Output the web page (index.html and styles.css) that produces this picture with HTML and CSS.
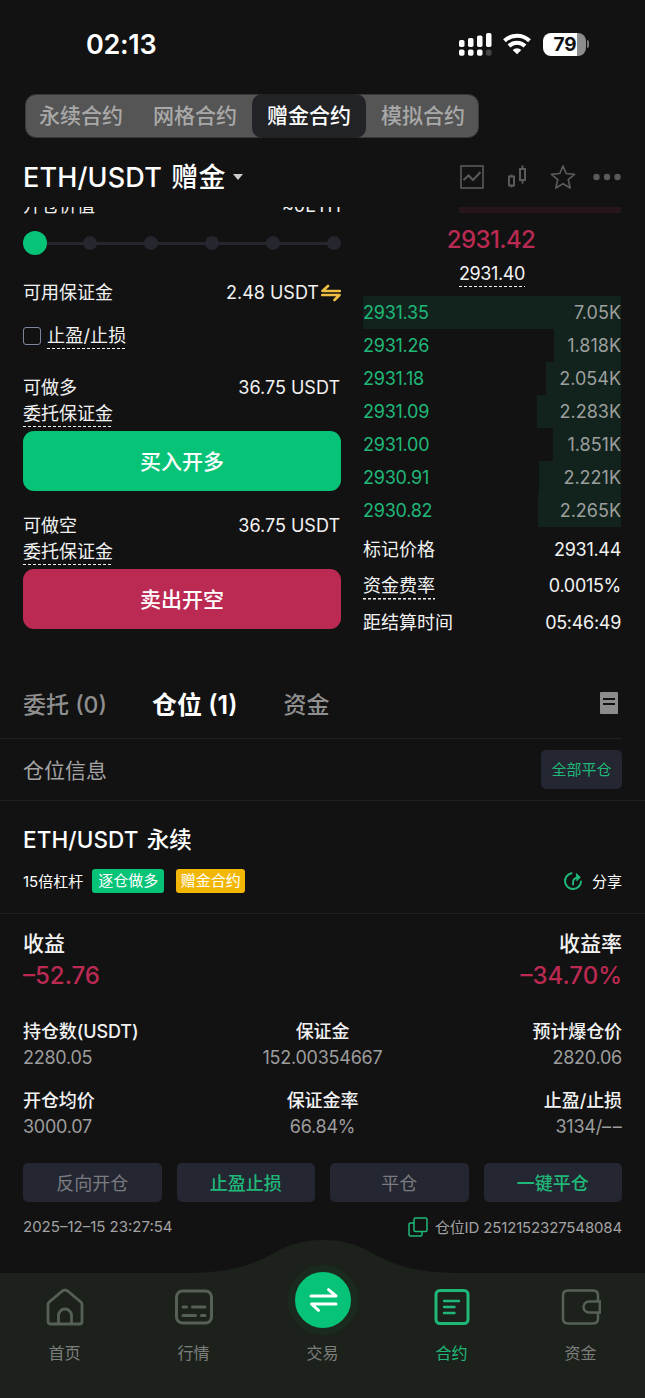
FILE: index.html
```html
<!DOCTYPE html>
<html lang="zh-CN">
<head>
<meta charset="UTF-8">
<meta name="viewport" content="width=device-width, initial-scale=1.0">
<title>ETH/USDT 赠金合约</title>
<link rel="stylesheet" href="styles.css">
</head>
<body>

<div class="status-bar">
    <span class="time">02:13</span>
    <svg class="signal" width="34" height="24" viewBox="0 0 34 24">
        <g fill="#fff">
            <rect x="0" y="8" width="5.500" height="7" rx="1.8"/>
            <rect x="9" y="6" width="5.500" height="9" rx="1.8"/>
            <rect x="18" y="3.500" width="5.500" height="11.500" rx="1.8"/>
            <rect x="27" y="1" width="5.500" height="14" rx="1.8"/>
            <rect x="0" y="17.500" width="5.500" height="6.200" rx="1.8"/>
            <rect x="9" y="17.500" width="5.500" height="6.200" rx="1.8"/>
            <rect x="18" y="17.500" width="5.500" height="6.200" rx="1.8"/>
        </g>
        <rect x="27" y="17.500" width="5.500" height="6.200" rx="1.8" fill="#444"/>
    </svg>
    <svg class="wifi" width="28" height="22" viewBox="0 0 28 22">
        <g fill="none" stroke="#fff" stroke-width="4">
            <path d="M1.500 7.800a18 18 0 0 1 25 0"/>
            <path d="M6 13a11.500 11.500 0 0 1 16 0"/>
        </g>
        <path d="M14 21.300l-4.300-4.400a6.200 6.200 0 0 1 8.600 0z" fill="#fff"/>
    </svg>
    <div class="battery"><span>79</span></div>
    <i class="battery-cap"></i>
</div>

<div class="contract-tabs">
    <span>永续合约</span>
    <span>网格合约</span>
    <span class="active">赠金合约</span>
    <span>模拟合约</span>
</div>

<div class="pair-bar">
    <h1 class="pair-name">ETH/USDT 赠金</h1>
    <i class="caret"></i>
    <div class="pair-icons">
        <svg width="24" height="24" viewBox="0 0 24 24" fill="none" stroke="#5a5a5a" stroke-width="1.6">
            <rect x="1" y="1" width="22" height="22"/>
            <path d="M3.500 15l5-4.500 4.500 4.500 7.500-8" stroke-width="2"/>
        </svg>
        <svg width="20" height="24" viewBox="0 0 20 24" fill="none" stroke="#5a5a5a" stroke-width="2">
            <path d="M2 11.500h5v9H2zM4.500 9.500v2M4.500 20.500v2M13 4h5v11h-5zM15.500 .5V4M15.500 15v3.500"/>
        </svg>
        <svg width="26" height="26" viewBox="0 0 26 26" fill="none" stroke="#5a5a5a" stroke-width="1.700" stroke-linejoin="round">
            <path d="M13 2l3.200 7.500 8.300.8-6.200 5.400 1.900 8.300L13 19.700 5.800 24l1.900-8.300L1.500 10.300l8.300-.8z"/>
        </svg>
        <svg width="28" height="8" viewBox="0 0 28 8" fill="#5a5a5a">
            <circle cx="3.500" cy="4" r="3.200"/><circle cx="14" cy="4" r="3.200"/><circle cx="24.500" cy="4" r="3.200"/>
        </svg>
    </div>
</div>

<div class="trade">
    <div class="order-form">
        <div class="clipped-row"><span>开仓价值</span><span><span class="tilde">~</span>0ETH</span></div>
        <div class="slider">
            <i class="knob"></i><i></i><i></i><i></i><i></i><i></i>
        </div>
        <div class="form-row available">
            <span>可用保证金</span>
            <span class="amount">2.48 USDT
                <svg width="20" height="18" viewBox="0 0 20 18" fill="none" stroke="#eebd42" stroke-width="2.700" stroke-linecap="round" stroke-linejoin="round">
                    <path d="M18.700 7H1.500L7 2M1.300 11h17.200L13.500 16"/>
                </svg>
            </span>
        </div>
        <div class="form-row stop">
            <i class="checkbox"></i><span class="dashed">止盈/止损</span>
        </div>
        <div class="form-row side"><span>可做多</span><span>36.75 USDT</span></div>
        <div class="form-row"><span class="dashed">委托保证金</span></div>
        <button class="order-btn buy">买入开多</button>
        <div class="form-row side"><span>可做空</span><span>36.75 USDT</span></div>
        <div class="form-row"><span class="dashed">委托保证金</span></div>
        <button class="order-btn sell">卖出开空</button>
    </div>

    <div class="order-book">
        <div class="ask-bar"></div>
        <div class="last-price">2931.42</div>
        <div class="index-price"><span class="dashed">2931.40</span></div>
        <div class="bid" style="--depth: 258px"><span>2931.35</span><b>7.05K</b></div>
        <div class="bid" style="--depth: 67px"><span>2931.26</span><b>1.818K</b></div>
        <div class="bid" style="--depth: 75px"><span>2931.18</span><b>2.054K</b></div>
        <div class="bid" style="--depth: 84px"><span>2931.09</span><b>2.283K</b></div>
        <div class="bid" style="--depth: 68px"><span>2931.00</span><b>1.851K</b></div>
        <div class="bid" style="--depth: 82px"><span>2930.91</span><b>2.221K</b></div>
        <div class="bid" style="--depth: 83px"><span>2930.82</span><b>2.265K</b></div>
        <div class="book-info">
            <div><span>标记价格</span><b>2931.44</b></div>
            <div><span class="dashed">资金费率</span><b>0.0015%</b></div>
            <div><span>距结算时间</span><b>05:46:49</b></div>
        </div>
    </div>
</div>

<div class="section-tabs">
    <span>委托 (0)</span>
    <span class="active">仓位 (1)</span>
    <span class="funds">资金</span>
    <svg width="18" height="22" viewBox="0 0 18 22">
        <rect width="18" height="22" rx="1" fill="#8c8c8c"/>
        <path d="M3 7h12M3 12h12" stroke="#121212" stroke-width="2"/>
    </svg>
</div>
<div class="position-bar">
    <span>仓位信息</span>
    <button class="close-all">全部平仓</button>
</div>

<div class="position-head">
    <h2>ETH/USDT 永续</h2>
    <div class="tags">
        <span class="leverage">15倍杠杆</span>
        <span class="tag long">逐仓做多</span>
        <span class="tag bonus">赠金合约</span>
        <svg width="20" height="20" viewBox="0 0 20 20" fill="none" stroke="#20b879" stroke-width="2" stroke-linecap="round" stroke-linejoin="round">
            <path d="M8.500 2.200A8 8 0 1 0 18 10.500M10 13.500C9.500 9 11 6.500 16 6.300"/>
            <path d="M13.700 3l3.500 3.200-3 3.300z" fill="#20b879" stroke-width="1"/>
        </svg>
        <span class="share">分享</span>
    </div>
</div>

<div class="position-body">
    <div class="profit-row">
        <div><span>收益</span><b>–52.76</b></div>
        <div><span>收益率</span><b>–34.70%</b></div>
    </div>
    <div class="stats">
        <div><span>持仓数(USDT)</span><em>2280.05</em></div>
        <div><span>保证金</span><em>152.00354667</em></div>
        <div><span>预计爆仓价</span><em>2820.06</em></div>
        <div><span>开仓均价</span><em>3000.07</em></div>
        <div><span>保证金率</span><em>66.84%</em></div>
        <div><span>止盈/止损</span><em>3134/<span class="unset">––</span></em></div>
    </div>
    <div class="actions">
        <button>反向开仓</button>
        <button class="on">止盈止损</button>
        <button>平仓</button>
        <button class="on">一键平仓</button>
    </div>
    <div class="meta">
        <span class="date">2025–12–15 23:27:54</span>
        <svg width="20" height="20" viewBox="0 0 20 20" fill="none" stroke="#20b879" stroke-width="1.500">
            <rect x="6" y="1" width="13" height="13.500" rx="1.500"/>
            <path d="M6 6H2.500Q1 6 1 7.500v10Q1 19 2.500 19h10Q14 19 14 17.500v-3"/>
        </svg>
        <span class="order-id">仓位ID 2512152327548084</span>
    </div>
</div>

<nav class="tab-bar">
    <svg class="bar-shape" width="645" height="158" viewBox="0 0 645 158">
        <path d="M0 33H185C232 33 254 24 274 13C289 4 304 0 323 0S357 4 372 13C392 24 414 33 461 33H645V158H0z" fill="#1c211c"/>
    </svg>
    <a class="item">
        <svg width="38" height="38" viewBox="0 0 38 38" fill="none" stroke="#566156" stroke-width="2.800" stroke-linejoin="round">
            <path d="M2 16.500Q2 15 3.200 14L16 3.200Q19 .8 22 3.200L34.800 14Q36 15 36 16.500V33.500Q36 36 33.500 36H4.500Q2 36 2 33.500zM12.500 36V27.500a6.500 6.500 0 0 1 13 0V36"/>
        </svg>
        <span>首页</span>
    </a>
    <a class="item">
        <svg width="38" height="38" viewBox="0 0 38 38" fill="none" stroke="#566156" stroke-width="3" stroke-linecap="round">
            <rect x="1.500" y="3" width="35" height="32" rx="6"/>
            <path d="M8 19h3.500M17.500 19h12.500M8 27.500h12.500M26.500 27.500h3.500"/>
        </svg>
        <span>行情</span>
    </a>
    <a class="item center">
        <i class="trade-btn">
            <svg width="30" height="28" viewBox="0 0 30 28" fill="none" stroke="#fff" stroke-width="3" stroke-linecap="round" stroke-linejoin="round">
                <path d="M3 10h25L20.500 3.700M28 18H3.500L10.500 24.300"/>
            </svg>
        </i>
        <span>交易</span>
    </a>
    <a class="item current">
        <svg width="38" height="38" viewBox="0 0 38 38" fill="none" stroke="#20b879" stroke-width="3" stroke-linecap="round">
            <rect x="3" y="2.500" width="32" height="33" rx="4"/>
            <path d="M11 13h15M11 19h10.500M11 25h10.500" stroke-width="2.400"/>
        </svg>
        <span>合约</span>
    </a>
    <a class="item">
        <svg width="40" height="38" viewBox="0 0 40 38" fill="none" stroke="#566156" stroke-width="2.500">
            <path d="M37 13.500V7.500Q37 2.500 32 2.500H7Q2 2.500 2 7.500V30.500Q2 35.500 7 35.500H32Q37 35.500 37 30.500V24.500M38.800 13.500H28a5.500 5.500 0 0 0 0 11H38.800z"/>
        </svg>
        <span>资金</span>
    </a>
</nav>

</body>
</html>
```
FILE: styles.css
```css
* {
    box-sizing: border-box;
}

body {
    margin: 0;
    width: 645px;
    height: 1398px;
    overflow: hidden;
    background: #121212;
    color: #f2f2f2;
    font-family: Inter, "Noto Sans CJK SC", sans-serif;
    font-size: 18px;
}

button {
    border: none;
    padding: 0 0 2px;
    font-family: inherit;
}

svg, i {
    flex: none;
    display: block;
}

/* Status bar */
.status-bar {
    height: 94px;
    padding: 0 56px 6px 86px;
    display: flex;
    align-items: center;
}

.time {
    flex: 1;
    font-size: 27px;
    font-weight: 600;
    letter-spacing: -0.3px;
    color: #fff;
}

.wifi {
    margin: 0 12px 0 10px;
}

.battery {
    width: 43px;
    height: 23px;
    padding-left: 1px;
    border-radius: 8px;
    background: linear-gradient(90deg, #fff 78%, #8d8d8d 78%);
    color: #111;
    font-size: 19px;
    font-weight: 700;
    line-height: 23px;
    text-align: center;
}

.battery-cap {
    width: 2px;
    height: 8px;
    margin-left: 1px;
    border-radius: 0 4px 4px 0;
    background: #777;
}

/* Contract type switch */
.contract-tabs {
    width: 454px;
    height: 44px;
    margin-left: 25px;
    display: flex;
    justify-content: center;
    border: 1px solid #39393b;
    border-radius: 11px;
    background: #555;
}

.contract-tabs span {
    flex: none;
    width: 114px;
    font-size: 21px;
    font-weight: 500;
    line-height: 42px;
    text-align: center;
    color: #a9a9a9;
}

.contract-tabs .active {
    margin: -1px 0;
    line-height: 44px;
    border-radius: 10px;
    background: #222327;
    color: #fff;
}

/* Pair title */
.pair-bar {
    height: 69px;
    padding: 9px 24px 0 23px;
    display: flex;
    align-items: center;
}

.pair-name {
    margin: -4px 0 0;
    font-size: 27px;
    font-weight: 500;
    letter-spacing: 0.15px;
    word-spacing: 2px;
    color: #fff;
}

.caret {
    margin-left: 7px;
    border: 5px solid transparent;
    border-top: 6px solid #ccc;
    border-bottom: 0;
}

.pair-icons {
    flex: 1;
    display: flex;
    align-items: center;
    justify-content: flex-end;
}

.pair-icons svg:nth-child(2) {
    margin: 0 23px;
}

.pair-icons svg:nth-child(4) {
    margin-left: 17px;
}

/* Order form and book */
.trade {
    height: 463px;
    padding: 0 24px 0 23px;
    display: grid;
    grid-template-columns: 318px 258px;
    column-gap: 22px;
}

.clipped-row {
    height: 9px;
    overflow: hidden;
    display: flex;
    justify-content: space-between;
    align-items: flex-end;
    line-height: 20px;
}

.tilde {
    position: relative;
    top: 3px;
}

.slider {
    height: 24px;
    margin-top: 15px;
    display: flex;
    align-items: center;
    justify-content: space-between;
    background: linear-gradient(#26262f, #26262f) center / 100% 3px no-repeat;
}

.slider i {
    width: 14px;
    height: 14px;
    border-radius: 50%;
    background: #26262f;
}

.slider .knob {
    width: 24px;
    height: 24px;
    margin-right: -11px;
    background: #06c377;
}

.form-row {
    height: 26px;
    display: flex;
    align-items: center;
    justify-content: space-between;
    line-height: 26px;
}

.available {
    margin-top: 25px;
}

.amount {
    display: flex;
    align-items: center;
    gap: 2px;
}

.stop {
    margin-top: 17px;
    justify-content: flex-start;
    gap: 6px;
    letter-spacing: 0.2px;
}

.checkbox {
    width: 18px;
    height: 18px;
    border: 1.5px solid #7f859d;
    border-radius: 3px;
}

.dashed {
    background: repeating-linear-gradient(90deg, currentColor 0 3px, transparent 3px 5px) left bottom / 100% 1.5px no-repeat;
}

.side span:last-child {
    padding-right: 1px;
}

.stop + .side {
    margin-top: 26px;
}

.order-btn {
    display: block;
    width: 318px;
    height: 60px;
    margin: 4px 0 22px;
    border-radius: 11px;
    font-size: 21px;
    font-weight: 500;
    color: #fff;
}

.buy {
    background: #06c377;
}

.sell {
    background: #bb2a52;
}

.ask-bar {
    width: 162px;
    height: 6px;
    margin-left: auto;
    background: #26151a;
}

.last-price {
    height: 54px;
    line-height: 54px;
    padding-right: 2px;
    text-align: center;
    font-size: 24px;
    font-weight: 500;
    letter-spacing: -0.6px;
    color: #bb2a52;
}

.index-price {
    height: 29px;
    margin-top: -6px;
    margin-bottom: 6px;
    text-align: center;
    line-height: 26px;
    letter-spacing: -0.4px;
}

.index-price .dashed {
    display: inline-block;
}

.bid {
    height: 33px;
    display: flex;
    justify-content: space-between;
    line-height: 33px;
    letter-spacing: -0.25px;
    color: #20b879;
    background: linear-gradient(#11231c, #11231c) right / var(--depth) 100% no-repeat;
}

.bid b {
    font-weight: 400;
    letter-spacing: 0;
    color: #9d9f9e;
}

.book-info div {
    height: 36.3px;
    padding-top: 10px;
    display: flex;
    justify-content: space-between;
    line-height: 26px;
}

.book-info b {
    font-weight: 400;
    letter-spacing: -0.3px;
}

/* Orders / positions / funds */
.section-tabs {
    width: 622px;
    height: 69px;
    padding: 0 4px 2px 23px;
    display: flex;
    align-items: center;
    border-bottom: 1px solid #202022;
    font-size: 23px;
    font-weight: 500;
    color: #8f8f8f;
}

.section-tabs .active {
    margin: 0 46px 0 45px;
    font-size: 25px;
    font-weight: 600;
    color: #fff;
}

.funds {
    flex: 1;
}

.position-bar {
    height: 62px;
    padding: 0 23px;
    display: flex;
    align-items: center;
    justify-content: space-between;
    border-bottom: 1px solid #202022;
    font-size: 21px;
    color: #a3a3a3;
}

.position-bar span {
    padding-bottom: 2px;
}

.close-all {
    width: 81px;
    height: 39px;
    border-radius: 5px;
    background: #242631;
    font-size: 15px;
    color: #20b879;
}

.position-head {
    height: 113px;
    padding: 23px 23px 0;
    border-bottom: 1px solid #202022;
}

.position-head h2 {
    margin: 0;
    font-size: 22.5px;
    font-weight: 500;
    line-height: 32px;
    letter-spacing: 0.1px;
    word-spacing: 2px;
    color: #fff;
}

.tags {
    height: 24px;
    margin-top: 13px;
    display: flex;
    align-items: center;
    font-size: 15px;
    color: #fff;
}

.leverage {
    margin-right: 9px;
    padding-bottom: 2px;
}

.tag {
    width: 72px;
    line-height: 24px;
    border-radius: 3px;
    text-align: center;
}

.long {
    margin-right: 12px;
    background: #06c377;
}

.bonus {
    width: 69px;
    margin-right: auto;
    background: #f2b705;
}

.share {
    margin-left: 9px;
    padding-bottom: 2px;
}

/* Position detail */
.position-body {
    height: 359px;
    padding: 14px 23px 0;
}

.profit-row {
    display: flex;
    justify-content: space-between;
}

.profit-row div {
    display: grid;
}

.profit-row div:last-child {
    text-align: right;
}

.profit-row span {
    font-size: 21px;
    font-weight: 500;
    line-height: 32px;
}

.profit-row b {
    font-size: 24px;
    font-weight: 500;
    line-height: 32px;
    color: #bb2a52;
}

.stats {
    margin-top: 27px;
    display: grid;
    grid-template-columns: 1fr 1fr 1fr;
    row-gap: 17px;
    text-align: center;
}

.stats div {
    display: grid;
    line-height: 26px;
}

.stats div:nth-child(3n+1) {
    text-align: left;
}

.stats div:nth-child(3n) {
    text-align: right;
}

.stats span {
    font-weight: 500;
    letter-spacing: -0.1px;
}

.stats em {
    font-style: normal;
    letter-spacing: -0.25px;
    color: #9d9d9d;
}

.stats .unset {
    margin-right: -1.5px;
    font-weight: 400;
    letter-spacing: 1.8px;
}

.actions {
    margin-top: 23px;
    display: grid;
    grid-template-columns: repeat(4, 1fr);
    gap: 15px;
}

.actions button {
    height: 39px;
    border-radius: 5px;
    background: #242631;
    font-size: 18px;
    color: #7b7c81;
}

.actions .on {
    font-weight: 500;
    color: #20b879;
}

.meta {
    margin-top: 14px;
    display: flex;
    align-items: center;
    font-size: 15px;
    color: #a3a3a3;
}

.date {
    margin-right: auto;
}

.order-id {
    margin-left: 7px;
    letter-spacing: -0.15px;
}

/* Bottom navigation */
.tab-bar {
    position: absolute;
    left: 0;
    top: 1240px;
    width: 645px;
    height: 158px;
    display: flex;
}

.bar-shape {
    position: absolute;
    left: 0;
    top: 0;
}

.item {
    position: relative;
    flex: 1;
    padding-top: 48px;
    display: flex;
    flex-direction: column;
    align-items: center;
    gap: 15px;
    font-size: 16px;
    line-height: 24px;
    color: #7c7f7c;
}

.center {
    padding-top: 25px;
    gap: 6px;
}

.trade-btn {
    width: 70px;
    height: 70px;
    display: flex;
    align-items: center;
    justify-content: center;
    border: 7px solid #1b2a1f;
    border-radius: 50%;
    background: #06c377;
}

.current {
    color: #20b879;
}
```
